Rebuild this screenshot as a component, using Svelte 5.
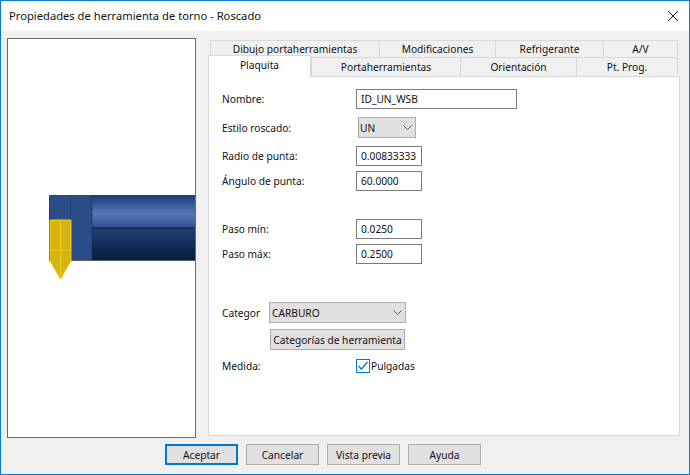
<script lang="ts">
  const topTabs = [
    { label: "Dibujo portaherramientas", width: 169 },
    { label: "Modificaciones", width: 116 },
    { label: "Refrigerante", width: 108 },
    { label: "A/V", width: 75 },
  ];
  const bottomTabs = [
    { label: "Plaquita", width: 103, active: true },
    { label: "Portaherramientas", width: 149 },
    { label: "Orientación", width: 116 },
    { label: "Pt. Prog.", width: 102 },
  ];
  const footerButtons = ["Aceptar", "Cancelar", "Vista previa", "Ayuda"];

  let checked = $state(true);
</script>

<div class="window">
  <header class="titlebar">
    <span>Propiedades de herramienta de torno - Roscado</span>
    <svg class="close" width="12" height="12" viewBox="0 0 12 12" aria-label="Cerrar">
      <path d="M1 1 L11 11 M11 1 L1 11" stroke="#1a1a1a" stroke-width="1" fill="none" />
    </svg>
  </header>

  <div class="body">
    <div class="preview">
      <svg width="187" height="398" viewBox="8 39 187 398">
        <defs>
          <linearGradient id="upper" x1="0" y1="0" x2="0" y2="1">
            <stop offset="0" stop-color="#1d3f7d" />
            <stop offset="0.55" stop-color="#5578b4" />
            <stop offset="0.85" stop-color="#3c5d9b" />
            <stop offset="1" stop-color="#2a4a88" />
          </linearGradient>
          <linearGradient id="lower" x1="0" y1="0" x2="0" y2="1">
            <stop offset="0" stop-color="#1f3f77" />
            <stop offset="1" stop-color="#0a1a3a" />
          </linearGradient>
        </defs>
        <rect x="92" y="196" width="104" height="32" fill="url(#upper)" />
        <rect x="92" y="229" width="104" height="31" fill="url(#lower)" />
        <rect x="92" y="227.5" width="104" height="1.5" fill="#16264e" />
        <rect x="50" y="196" width="42" height="64" fill="#2b4c86" />
        <path d="M70.5 196 V260" stroke="#234379" stroke-width="1" />
        <path d="M50 228.5 H92" stroke="#234a8e" stroke-width="1" />
        <path d="M92 196 V260" stroke="#16305f" stroke-width="1" stroke-dasharray="2 1" />
        <path d="M49.5 261 V195.5 H196" fill="none" stroke="#3c4048" stroke-width="1" />
        <path d="M49.5 260.5 H196" fill="none" stroke="#5a5d63" stroke-width="1" />
        <path d="M50 220 H71 V261 L60.5 279 L50 261 Z" fill="#d4b414" stroke="#f0cf00" stroke-width="1" />
        <path d="M60.5 220 V278 M50 250 H71" stroke="#eccb10" stroke-width="1" fill="none" />
      </svg>
    </div>

    <div class="tabs">
      <div class="tabrow top">
        {#each topTabs as tab}
          <div class="tab" style="width: {tab.width}px">{tab.label}</div>
        {/each}
      </div>
      <div class="tabrow bottom">
        {#each bottomTabs as tab}
          <div class="tab" class:active={tab.active} style="width: {tab.width}px">{tab.label}</div>
        {/each}
      </div>

      <div class="panel">
        <div class="row name">
          <span class="label">Nombre:</span>
          <input class="input wide" value="ID_UN_WSB" />
        </div>
        <div class="row style">
          <span class="label">Estilo roscado:</span>
          <div class="select small">
            <span>UN</span>
            <svg width="9" height="5" viewBox="0 0 9 5"><path d="M0.5 0.5 L4.5 4.5 L8.5 0.5" fill="none" stroke="#555" /></svg>
          </div>
        </div>
        <div class="row radius">
          <span class="label">Radio de punta:</span>
          <input class="input" value="0.00833333" />
        </div>
        <div class="row angle">
          <span class="label">Ángulo de punta:</span>
          <input class="input" value="60.0000" />
        </div>
        <div class="row pmin">
          <span class="label">Paso mín:</span>
          <input class="input" value="0.0250" />
        </div>
        <div class="row pmax">
          <span class="label">Paso máx:</span>
          <input class="input" value="0.2500" />
        </div>
        <div class="row cat">
          <span class="label short">Categor</span>
          <div class="select large">
            <span>CARBURO</span>
            <svg width="9" height="5" viewBox="0 0 9 5"><path d="M0.5 0.5 L4.5 4.5 L8.5 0.5" fill="none" stroke="#555" /></svg>
          </div>
        </div>
        <div class="row catbtn">
          <button class="btn" type="button">Categorías de herramienta</button>
        </div>
        <div class="row measure">
          <span class="label">Medida:</span>
          <button class="check" type="button" aria-label="Pulgadas" onclick={() => (checked = !checked)}>
            {#if checked}
              <svg width="12" height="12" viewBox="0 0 12 12"><path d="M1.5 6 L4.5 9 L10.5 2" fill="none" stroke="#0078d7" stroke-width="1.3" /></svg>
            {/if}
          </button>
          <span class="checktext">Pulgadas</span>
        </div>
      </div>
    </div>
  </div>

  <footer class="footer">
    {#each footerButtons as label, i}
      <button class="btn foot" class:default={i === 0} type="button">{label}</button>
    {/each}
  </footer>
</div>

<style>
  :global(body) {
    margin: 0;
  }
  .window {
    width: 690px;
    height: 475px;
    box-sizing: border-box;
    border: 1px solid #0a7bd4;
    background: #f0f0f0;
    display: flex;
    flex-direction: column;
    font-family: "Noto Sans", "Open Sans", sans-serif;
    font-size: 10.2px;
    line-height: 16px;
    color: #111;
    overflow: hidden;
  }
  .titlebar {
    height: 30px;
    flex-shrink: 0;
    background: #fff;
    display: flex;
    align-items: center;
    justify-content: space-between;
    padding: 0 10px 0 8px;
    font-size: 11.2px;
  }
  .body {
    display: flex;
    height: 406px;
    padding: 7px 0 0 6px;
    box-sizing: border-box;
  }
  .preview {
    box-sizing: border-box;
    width: 189px;
    height: 400px;
    border: 1px solid #696969;
    background: #fff;
    flex-shrink: 0;
  }
  .preview svg {
    display: block;
  }
  .tabs {
    margin-left: 12px;
    width: 472px;
    display: flex;
    flex-direction: column;
  }
  .tabrow {
    display: flex;
  }
  .tabrow.top {
    margin-left: 2px;
    margin-top: 2px;
  }
  .tabrow.bottom {
    margin-top: -1px;
    position: relative;
  }
  .tab {
    box-sizing: border-box;
    height: 18px;
    border: 1px solid #d9d9d9;
    border-right-width: 0;
    border-bottom: 0;
    background: #f0f0f0;
    text-align: center;
    line-height: 17px;
    white-space: nowrap;
  }
  .tab:last-child {
    border-right-width: 1px;
  }
  .bottom .tab {
    height: 20px;
    border-bottom: 1px solid #d9d9d9;
    line-height: 18px;
  }
  .bottom .tab.active {
    height: 22px;
    margin-top: -2px;
    margin-bottom: -1px;
    background: #fff;
    border-bottom: 0;
    border-right-width: 1px;
    position: relative;
    z-index: 1;
  }
  .panel {
    height: 360px;
    box-sizing: border-box;
    margin-top: -1px;
    width: 472px;
    background: #fff;
    border: 1px solid #d9d9d9;
    padding: 12px 0 0 13px;
  }
  .row {
    display: flex;
    align-items: center;
  }
  .label {
    width: 134px;
    flex-shrink: 0;
  }
  .label.short {
    width: 47px;
    white-space: nowrap;
  }
  .input {
    box-sizing: border-box;
    width: 66px;
    height: 20px;
    padding: 0 0 0 4px;
    border: 1px solid #7a7a7a;
    background: #fff;
    font: inherit;
    color: inherit;
    outline: none;
    border-radius: 0;
  }
  .input.wide {
    width: 161px;
  }
  .select {
    box-sizing: border-box;
    height: 21px;
    background: #e1e1e1;
    border: 1px solid #adadad;
    display: flex;
    align-items: center;
    justify-content: space-between;
    padding: 0 3px 0 2px;
  }
  .select.small {
    width: 58px;
    margin-left: 2px;
    padding-left: 1px;
  }
  .select.large {
    width: 137px;
  }
  .btn {
    box-sizing: border-box;
    background: #e1e1e1;
    border: 1px solid #adadad;
    font: inherit;
    color: inherit;
    padding: 0;
    border-radius: 0;
    white-space: nowrap;
  }
  .style { margin-top: 8px; }
  .radius { margin-top: 8px; }
  .angle { margin-top: 5px; }
  .pmin { margin-top: 28px; }
  .pmax { margin-top: 5px; }
  .cat { margin-top: 38px; }
  .catbtn { margin-top: 6px; padding-left: 48px; }
  .catbtn .btn {
    width: 135px;
    height: 21px;
  }
  .measure { margin-top: 8px; height: 16px; }
  .check {
    box-sizing: border-box;
    width: 14px;
    height: 14px;
    padding: 0;
    border: 1px solid #0078d7;
    background: #fff;
    display: flex;
    align-items: center;
    justify-content: center;
    border-radius: 0;
  }
  .checktext {
    margin-left: 1px;
  }
  .footer {
    display: flex;
    gap: 8px;
    padding: 7px 0 0 164px;
  }
  .foot {
    width: 73px;
    height: 21px;
  }
  .foot.default {
    border: 2px solid #0078d7;
  }
</style>
